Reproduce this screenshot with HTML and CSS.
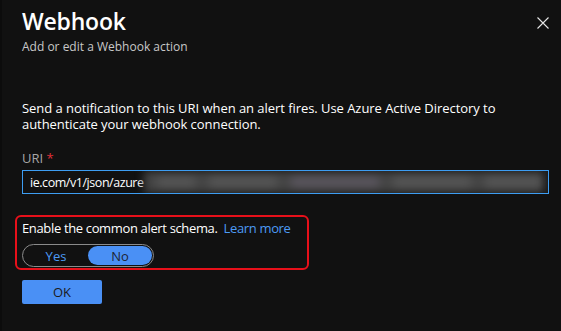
FILE: index.html
```html
<!DOCTYPE html>
<html>
<head>
<meta charset="utf-8">
<link rel="stylesheet" href="styles.css">
</head>
<body>
<div class="panel">
  <div class="header">
    <div class="titles">
      <h1 class="title">Webhook</h1>
      <div class="subtitle">Add or edit a Webhook action</div>
    </div>
    <button class="close" aria-label="Close">
      <svg width="12" height="12" viewBox="0 0 12 12"><path d="M0.5 0.5 L11.5 11.5 M11.5 0.5 L0.5 11.5" stroke="#e6e6e6" stroke-width="1.1" fill="none"/></svg>
    </button>
  </div>
  <p class="desc">Send a notification to this URI when an alert fires. Use Azure Active Directory to authenticate your webhook connection.</p>
  <label class="label">URI <span class="req">*</span></label>
  <div class="input">
    <span class="value">ie.com/v1/json/azure</span>
    <span class="blur"><span class="b1"></span><span class="b2"></span><span class="b3"></span><span class="b4"></span><span class="b5"></span></span>
    <span class="endcap"></span>
  </div>
  <div class="schema">
    <div class="schema-text">Enable the common alert schema. <a class="link">Learn more</a></div>
    <div class="toggle">
      <span class="opt">Yes</span>
      <span class="opt on">No</span>
    </div>
  </div>
  <button class="ok">OK</button>
</div>
</body>
</html>
```
FILE: styles.css
```css
html, body {
  margin: 0;
  padding: 0;
  background: #111111;
  height: 100%;
}
body {
  font-family: "Open Sans", "Noto Sans", sans-serif;
  color: #ffffff;
  border-left: 2px solid #0c0c0c;
  box-sizing: border-box;
}
.panel {
  padding: 0 12px 0 20px;
}
.header {
  display: flex;
  justify-content: space-between;
  align-items: flex-start;
}
.title {
  margin: 0;
  padding-top: 6px;
  font-size: 23px;
  font-weight: 600;
  line-height: 30px;
  letter-spacing: -0.2px;
}
.subtitle {
  font-size: 12px;
  color: #c8c8c8;
  line-height: 16px;
  margin-top: 3px;
}
.close {
  background: none;
  border: 0;
  padding: 0;
  margin-top: 17px;
  width: 12px;
  height: 12px;
  display: flex;
}
.desc {
  margin: 45px 0 0;
  font-size: 13px;
  line-height: 16px;
  letter-spacing: -0.05px;
  color: #ffffff;
  padding-right: 14px;
}
.label {
  display: block;
  margin-top: 18px;
  font-size: 13px;
  line-height: 17px;
  color: #a6a6a6;
}
.req {
  color: #e0303a;
}
.input {
  margin-top: 3px;
  width: 527px;
  height: 24px;
  box-sizing: border-box;
  border: 1px solid #3d9df2;
  display: flex;
  align-items: center;
  padding-left: 7px;
  overflow: hidden;
}
.value {
  font-size: 12.5px;
  letter-spacing: -0.45px;
  white-space: nowrap;
  color: #ffffff;
}
.blur {
  flex: 1;
  height: 22px;
  display: flex;
  align-items: center;
  background: #444444;
  filter: blur(4px);
}
.blur span {
  height: 12px;
  background: #545454;
  border-radius: 6px;
  margin-left: 12px;
}
.b1 { width: 40px; }
.b2 { width: 70px; }
.b3 { width: 90px; background: #58545c !important; }
.b4 { width: 80px; }
.b5 { width: 60px; }
.endcap {
  width: 6px;
  height: 22px;
  background: #151515;
}
.schema {
  margin-top: 21px;
  margin-left: -7px;
  width: 294px;
  height: 55px;
  box-sizing: border-box;
  border: 2px solid #e8101a;
  border-radius: 6px;
  padding: 3px 0 0 5px;
}
.schema-text {
  font-size: 13px;
  line-height: 17px;
  letter-spacing: -0.35px;
}
.link {
  color: #4d9bf5;
  margin-left: 3px;
}
.toggle {
  margin-top: 7px;
  width: 132px;
  height: 23px;
  box-sizing: border-box;
  border: 1px solid #8a8a8a;
  border-radius: 12px;
  display: flex;
  padding: 1px;
}
.opt {
  flex: 1;
  display: flex;
  align-items: center;
  justify-content: center;
  font-size: 13px;
  color: #4d9bf5;
  border-radius: 10px;
}
.opt.on {
  background: #4a90f5;
  color: #1d2533;
}
.ok {
  margin-top: 10px;
  width: 80px;
  height: 24px;
  border: 0;
  border-radius: 2px;
  background: #4a90f5;
  color: #1a1a1a;
  font-family: "Open Sans", "Noto Sans", sans-serif;
  font-size: 13px;
  padding: 0;
}
```
